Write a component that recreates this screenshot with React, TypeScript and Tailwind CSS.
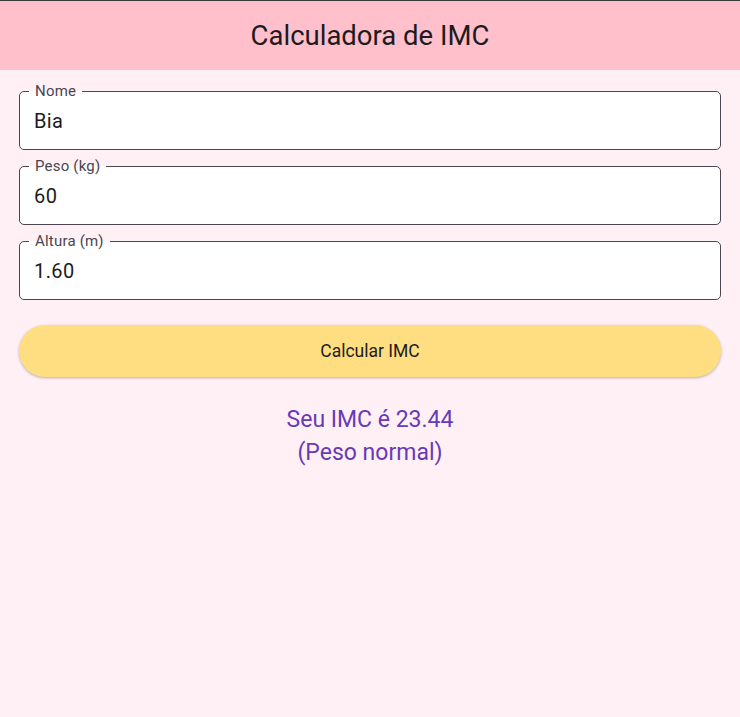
import React from 'react';

const fields = [
  { label: 'Nome', value: 'Bia' },
  { label: 'Peso (kg)', value: '60' },
  { label: 'Altura (m)', value: '1.60' },
];

export default function App() {
  return (
    <div className="min-h-[717px] bg-[#fff0f5] font-['Roboto',sans-serif]">
      {/* App bar */}
      <header className="h-[70px] border-t border-[#3a3a3a] bg-[#ffc0cb] flex items-center justify-center">
        <h1 className="text-[27.5px] text-[#1d1b20] leading-none">Calculadora de IMC</h1>
      </header>

      <main className="px-[19px] pt-[21px]">
        <div className="flex flex-col gap-[16px]">
          {fields.map((f, i) => (
            <div key={i} className="relative h-[59px] rounded-[5px] border border-[#4b4650] bg-white flex items-center">
              <span className="absolute -top-[10px] left-[9px] px-[6px] text-[15px] leading-[18px] tracking-[0.2px] text-[#49454f] bg-[linear-gradient(to_bottom,#fff0f5_50%,#ffffff_50%)]">
                {f.label}
              </span>
              <span className="pl-[14px] text-[20px] text-[#1d1b20] tracking-[0.4px]">{f.value}</span>
            </div>
          ))}
        </div>

        <button className="mt-[25px] w-full h-[52px] rounded-full bg-[#ffde82] shadow-[0_1px_3px_rgba(0,0,0,0.28)] text-[17.5px] text-[#1d1b20] flex items-center justify-center pt-[1px]">
          Calcular IMC
        </button>

        <div className="mt-[26px] text-center text-[23px] leading-[33px] text-[#673ab7]">
          <div>Seu IMC é 23.44</div>
          <div>(Peso normal)</div>
        </div>
      </main>
    </div>
  );
}
